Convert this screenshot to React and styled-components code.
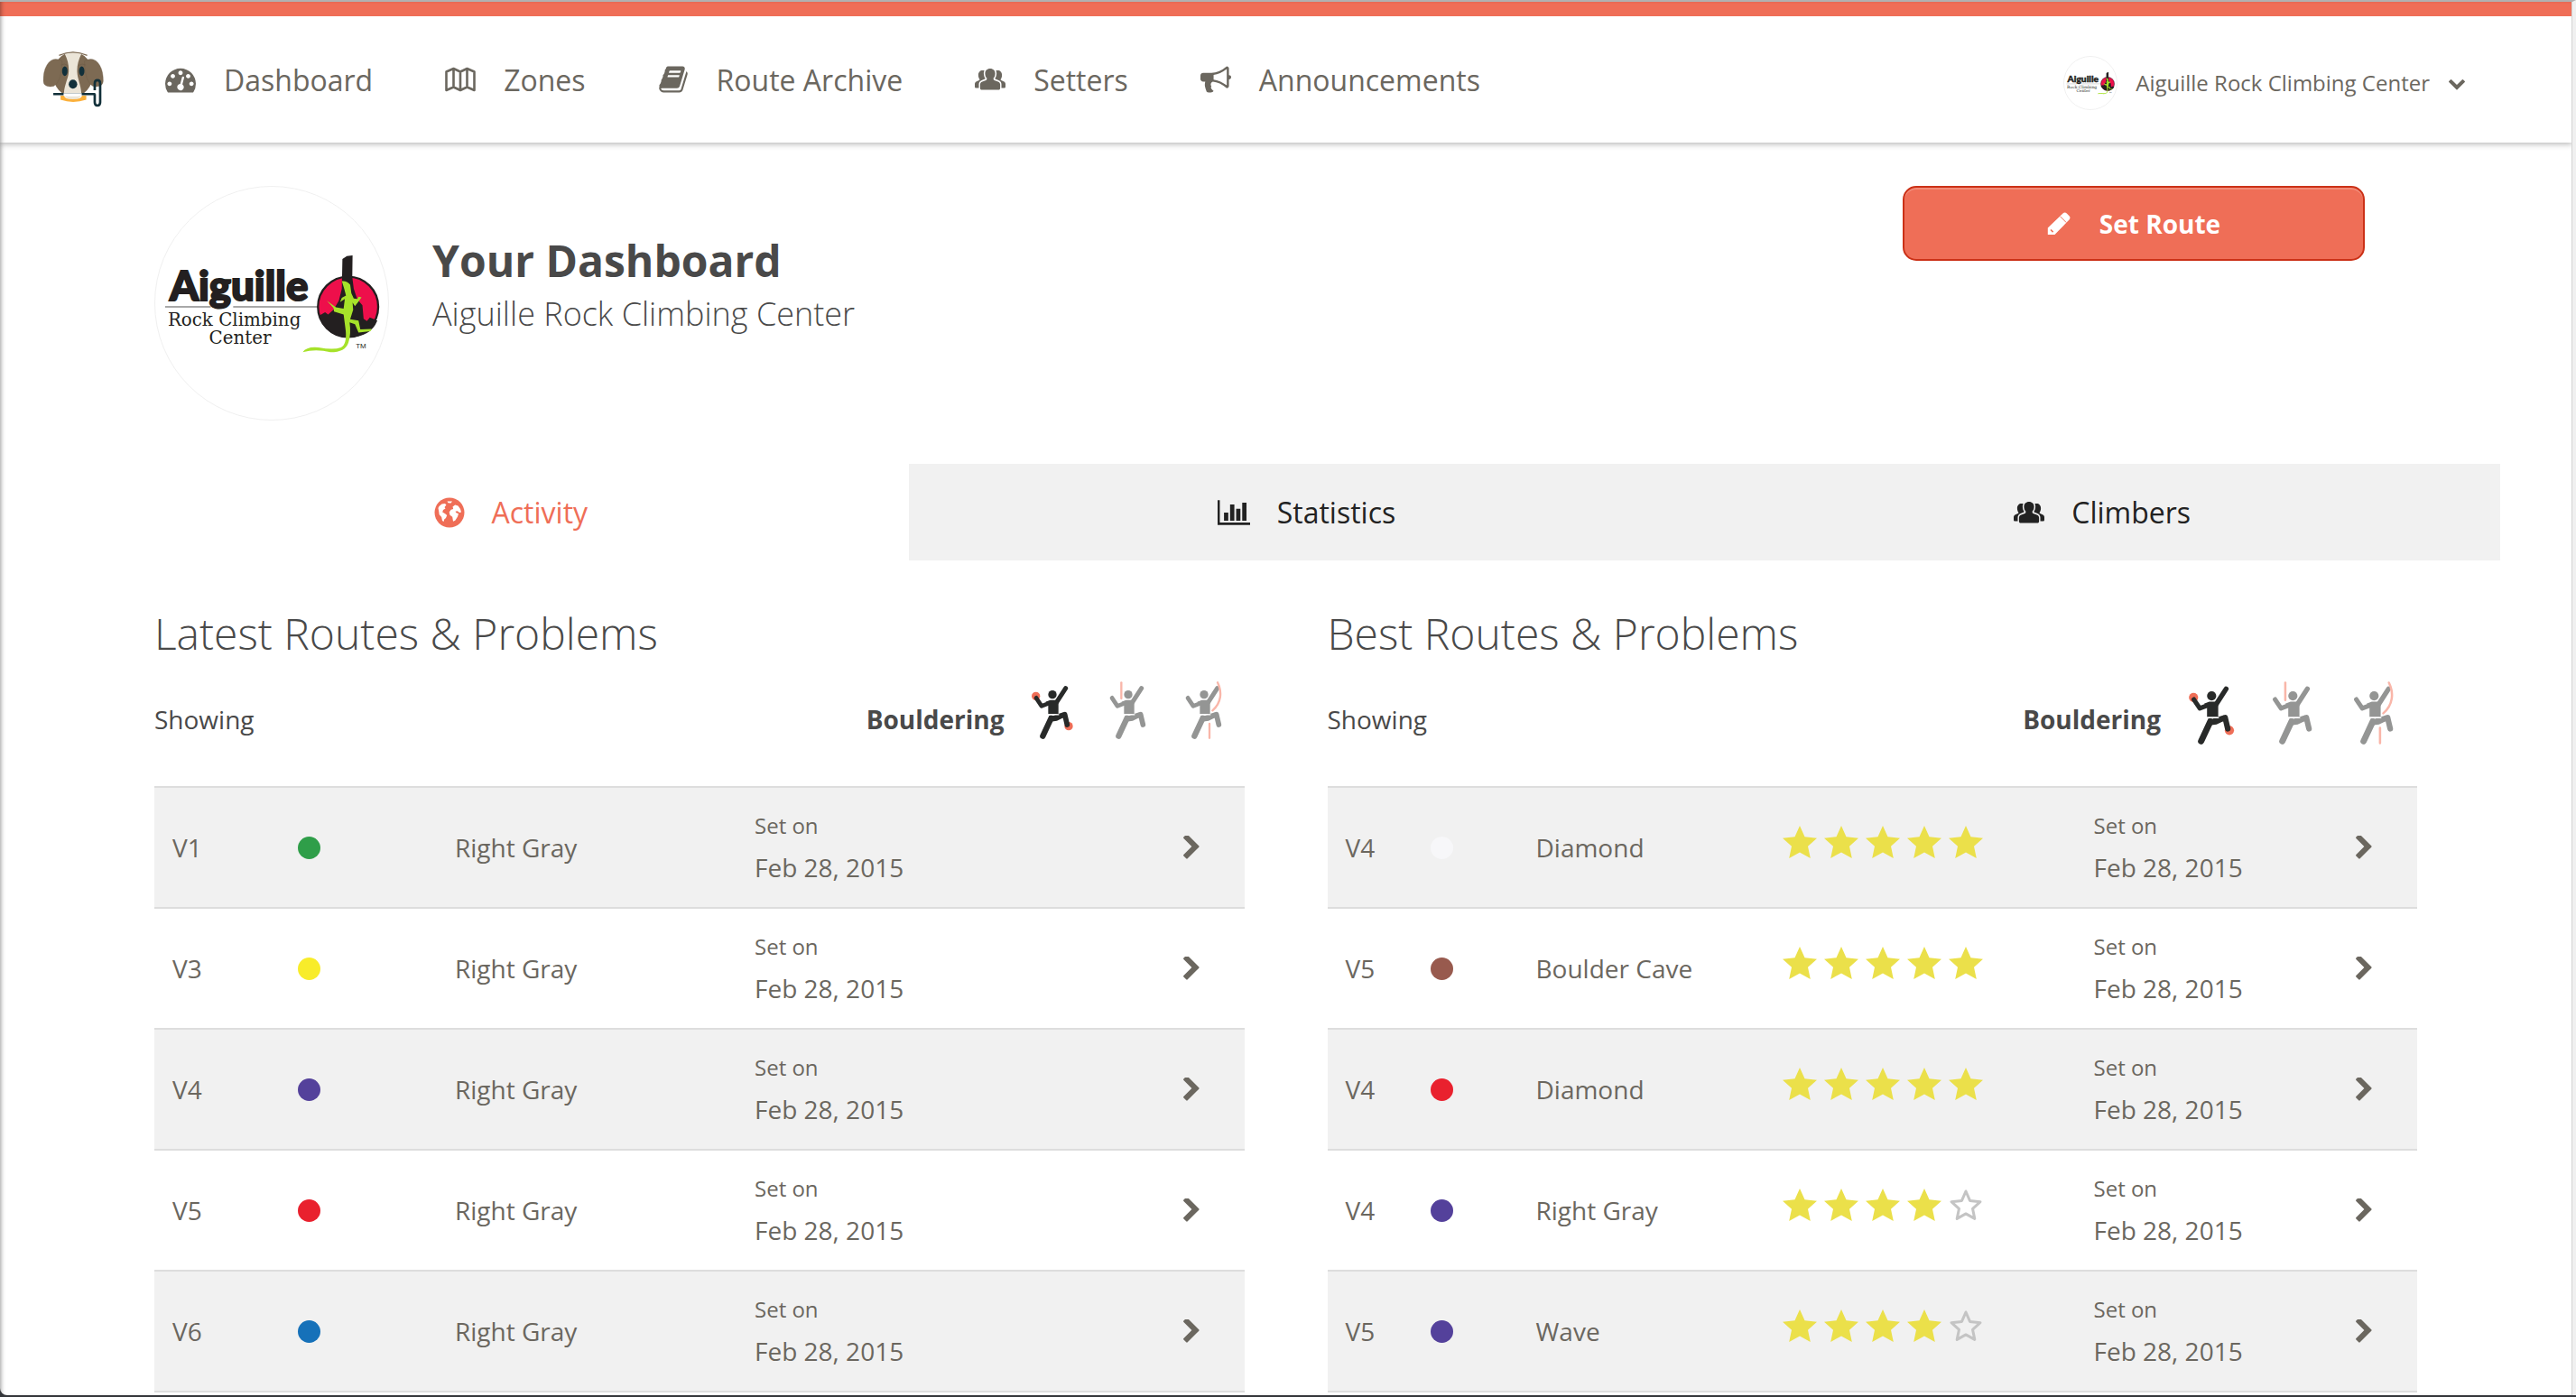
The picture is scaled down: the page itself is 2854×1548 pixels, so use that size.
import React from "react";
import styled, { createGlobalStyle, css } from "styled-components";

const color = {
  coral: "#ef6e57",
  coralDark: "#cb3117",
  text: "#6b675f",
  heading: "#494949",
  ink: "#222222",
  stripe: "#f1f1f1",
  line: "#dddddd",
  star: "#ebe04a",
};

const Global = createGlobalStyle`
  * { box-sizing: border-box; }
  body {
    margin: 0;
    background: #34363a;
    color: ${color.text};
    font-family: "Open Sans", "Noto Sans", sans-serif;
    font-size: 28px;
  }
  button { font: inherit; color: inherit; background: none; border: 0; padding: 0; cursor: pointer; }
  a { color: inherit; text-decoration: none; }
  h1, h2, p { margin: 0; }
  svg { display: block; flex: none; }
`;

/* ---------- page frame ---------- */

const Desktop = styled.div`
  height: 100vh;
  padding-bottom: 2px;
`;

const Window = styled.div`
  position: relative;
  height: 100%;
  overflow: hidden;
  background: #fff;
  border-top: 2px solid #b1b1b1;
  border-right: 4px solid #f0f0f0;
  border-bottom-left-radius: 8px;
  &::after {
    content: "";
    position: absolute;
    inset: 0;
    pointer-events: none;
    border-right: 1px solid #d4d4d4;
    box-shadow: inset 4px 0 5px -3px rgba(0, 0, 0, 0.4);
  }
`;

const Header = styled.header`
  display: flex;
  align-items: center;
  height: 156px;
  padding: 0 118px 0 48px;
  border-top: 16px solid ${color.coral};
  background: #fff;
  box-shadow: 0 1px 7px rgba(0, 0, 0, 0.35);
`;

const Brand = styled.a`
  margin-right: 68px;
`;

const Nav = styled.nav`
  display: flex;
  gap: 80px;
  font-size: 32px;
`;

const iconLabel = css`
  display: flex;
  align-items: center;
`;

const NavLink = styled.a`
  ${iconLabel}
  gap: 31px;
`;

const UserMenu = styled.button`
  display: flex;
  align-items: center;
  gap: 20px;
  margin-left: auto;
  padding-top: 7px;
  font-size: 24px;
`;

const Avatar = styled.span`
  display: block;
  width: ${(p) => p.$size}px;
  height: ${(p) => p.$size}px;
  border: 1px solid #f0f0f0;
  border-radius: 50%;
  overflow: hidden;
  svg { width: 100%; height: 100%; }
`;

const Main = styled.main`
  padding: 48px 80px 0 125px;
`;

/* ---------- profile ---------- */

const Profile = styled.section`
  display: flex;
  gap: 48px;
  padding: 0 150px 48px 46px;
`;

const ProfileText = styled.div`
  flex: 1;
  padding-top: 51px;
  color: ${color.heading};
`;

const Title = styled.h1`
  font-size: 48px;
  line-height: 64px;
  font-weight: 700;
`;

const Subtitle = styled.p`
  font-size: 36px;
  line-height: 54px;
  font-weight: 300;
`;

const PrimaryButton = styled.button`
  display: flex;
  align-items: center;
  justify-content: center;
  gap: 32px;
  width: 512px;
  height: 83px;
  border: 2px solid ${color.coralDark};
  border-radius: 15px;
  background: ${color.coral};
  box-shadow: inset 0 2px 0 rgba(255, 255, 255, 0.2);
  color: #fff;
  font-weight: 700;
`;

/* ---------- tabs ---------- */

const Tabs = styled.div`
  display: grid;
  grid-template-columns: repeat(3, 1fr);
  height: 107px;
`;

const Tab = styled.button`
  ${iconLabel}
  gap: 30px;
  justify-content: center;
  font-size: 32px;
  color: ${(p) => (p.$active ? color.coral : color.ink)};
  background: ${(p) => (p.$active ? "transparent" : color.stripe)};
`;

/* ---------- panels ---------- */

const Panels = styled.div`
  display: grid;
  grid-template-columns: 1fr 1fr;
  gap: 92px;
  padding: 49px 92px 0 46px;
`;

const PanelTitle = styled.h2`
  font-size: 48px;
  line-height: 64px;
  font-weight: 300;
  color: ${color.heading};
`;

const Filter = styled.div`
  display: flex;
  align-items: center;
  justify-content: space-between;
  margin: 21px 0 32px;
  padding-right: 18px;
  color: ${color.heading};
`;

const FilterChoices = styled.div`
  display: flex;
  align-items: center;
  gap: ${(p) => p.$gap}px;
`;

const FilterValue = styled.strong`
  margin-right: -4px;
`;

const FilterButton = styled.button`
  display: flex;
  align-items: flex-start;
  height: 84px;
`;

const Table = styled.table`
  width: 100%;
  table-layout: fixed;
  border-collapse: collapse;
  border-bottom: 2px solid ${color.line};
`;

const Col = styled.col`
  width: ${(p) => (p.$w ? `${p.$w}px` : "auto")};
`;

const Row = styled.tr`
  height: 134px;
  border-top: 2px solid ${color.line};
  &:nth-child(odd) { background: ${color.stripe}; }
`;

const Cell = styled.td`
  padding: 0 0 0 20px;
  vertical-align: middle;
  white-space: nowrap;
`;

const Dot = styled.span`
  display: block;
  width: 25px;
  height: 25px;
  border-radius: 50%;
  background: ${(p) => p.$fill};
`;

const Stars = styled.div`
  display: flex;
  gap: 8px;
  padding-bottom: 12px;
`;

const SetOn = styled.div`
  line-height: 46px;
  padding-bottom: 2px;
  small { display: block; font-size: 24px; }
`;

/* ---------- icons ---------- */

const Fa = ({ d, size = 34, w = size, box = "0 0 1792 1792" }) => (
  <svg width={w} height={size} viewBox={box} fill="currentColor" aria-hidden="true">
    <path d={d} />
  </svg>
);

const GAUGE =
  "M384 1152q0-53-37.5-90.5t-90.5-37.5-90.5 37.5-37.5 90.5 37.5 90.5 90.5 37.5 90.5-37.5 37.5-90.5zm192-448q0-53-37.5-90.5t-90.5-37.5-90.5 37.5-37.5 90.5 37.5 90.5 90.5 37.5 90.5-37.5 37.5-90.5zm428 481l101-382q6-26-7.5-48.5t-38.5-29.5-48 6.5-30 39.5l-101 382q-60 5-107 43.5t-63 98.5q-20 77 20 146t117 89 146-20 89-117q16-60-6-117t-72-91zm660-33q0-53-37.5-90.5t-90.5-37.5-90.5 37.5-37.5 90.5 37.5 90.5 90.5 37.5 90.5-37.5 37.5-90.5zm-640-640q0-53-37.5-90.5t-90.5-37.5-90.5 37.5-37.5 90.5 37.5 90.5 90.5 37.5 90.5-37.5 37.5-90.5zm448 192q0-53-37.5-90.5t-90.5-37.5-90.5 37.5-37.5 90.5 37.5 90.5 90.5 37.5 90.5-37.5 37.5-90.5zm320 448q0 261-141 483-19 29-54 29h-1402q-35 0-54-29-141-221-141-483 0-182 71-348t191-286 286-191 348-71 348 71 286 191 191 286 71 348z";
const BOOK =
  "M1703 478q40 57 18 129l-275 906q-19 64-76.5 107.5t-122.5 43.5h-923q-77 0-148.5-53.5t-99.5-131.5q-24-67-2-127 0-4 3-27t4-37q1-8-3-21.5t-3-19.5q2-11 8-21t16.5-23.5 16.5-23.5q23-38 45-91.5t30-91.5q3-10 .5-30t-.5-28q3-11 17-28t17-23q21-36 42-92t25-90q1-9-2.5-32t.5-28q4-13 22-30.5t22-22.5q19-26 42.5-84.5t27.5-96.5q1-8-3-25.5t-2-26.5q2-8 9-18t18-23 17-21q8-12 16.5-30.5t15-35 16-36 19.5-32 26.5-23.5 36-11.5 47.5 5.5l-1 3q38-9 51-9h761q74 0 114 56t18 130l-274 906q-36 119-71.5 153.5t-128.5 34.5h-869q-27 0-38 15-11 16-1 43 24 70 144 70h923q29 0 56-15.5t35-41.5l300-987q7-22 5-57 38 15 59 43zm-1064 2q-4 13 2 22.5t20 9.5h608q13 0 25.5-9.5t16.5-22.5l21-64q4-13-2-22.5t-20-9.5h-608q-13 0-25.5 9.5t-16.5 22.5zm-83 256q-4 13 2 22.5t20 9.5h608q13 0 25.5-9.5t16.5-22.5l21-64q4-13-2-22.5t-20-9.5h-608q-13 0-25.5 9.5t-16.5 22.5z";
const HORN =
  "M1664 640q53 0 90.5 37.5t37.5 90.5-37.5 90.5-90.5 37.5v384q0 52-38 90t-90 38q-417-347-812-380-58 19-91 66t-31 100.5 40 92.5q-20 33-23 65.5t6 58 33.5 55 48 50 61.5 50.5q-29 58-111.5 83t-168.5 11.5-132-55.5q-7-23-29.5-87.5t-32-94.5-23-89-15-101 3.5-98.5 22-110.5h-122q-66 0-113-47t-47-113v-192q0-66 47-113t113-47h480q435 0 896-384 52 0 90 38t38 90v384zm-128 604v-954q-394 302-768 343v270q377 42 768 341z";
const CHEVRON_RIGHT =
  "M1363 877l-742 742q-19 19-45 19t-45-19l-166-166q-19-19-19-45t19-45l531-531-531-531q-19-19-19-45t19-45l166-166q19-19 45-19t45 19l742 742q19 19 19 45t-19 45z";
const CHEVRON_DOWN =
  "M1683 808l-742 741q-19 19-45 19t-45-19l-742-741q-19-19-19-45.5t19-45.5l166-165q19-19 45-19t45 19l531 531 531-531q19-19 45-19t45 19l166 165q19 19 19 45.5t-19 45.5z";

const MapIcon = () => (
  <svg width="34" height="28" viewBox="0 0 34 28" fill="none" stroke="currentColor" strokeWidth="2.6" strokeLinejoin="round" aria-hidden="true">
    <path d="M1.5 5.5 9.5 2 17 5.5 24.5 2 32.5 5.5V26L24.5 22.5 17 26 9.5 22.5 1.5 26ZM9.5 2V22.5M17 5.5V26M24.5 2V22.5" />
  </svg>
);

const PeopleIcon = () => (
  <svg width="34" height="24" viewBox="0 0 34 24" fill="currentColor" aria-hidden="true">
    <path d="M17 0c3.400 0 5.600 2.300 5.600 5.400 0 2-.8 4-1.900 5.200v1.200c0 .6.400.9 1 1.100l4 1.500c1.600.6 2.400 1.700 2.400 3.300v4.100c0 1.200-.7 1.800-1.800 1.800H7.700c-1.100 0-1.800-.6-1.800-1.800v-4.100c0-1.600.8-2.700 2.400-3.300l4-1.500c.6-.2 1-.5 1-1.100v-1.200c-1.100-1.200-1.900-3.200-1.900-5.200C11.400 2.300 13.600 0 17 0Z" />
    <path d="M10.700 2.200C10 3.200 9.900 4.300 9.900 5.500c0 2.200.7 4.200 1.900 5.700l-4.200 1.700c-2 .8-3.100 2.400-3.100 4.500v4.200H1.600C.6 21.600 0 21 0 20v-2.900c0-1.400.6-2.300 2-2.900l2.600-1.200c.6-.3.800-.6.8-1.100-1-1.100-1.500-3-1.500-4.900 0-2.900 2-5 4.600-5 .8 0 1.500 0 2.200.2Z" />
    <path d="M23.300 2.200c.7 1 .8 2.100.8 3.300 0 2.200-.7 4.200-1.900 5.700l4.200 1.700c2 .8 3.100 2.400 3.100 4.500v4.200h2.900c1 0 1.600-.6 1.600-1.600v-2.900c0-1.400-.6-2.300-2-2.900l-2.600-1.200c-.6-.3-.8-.6-.8-1.100 1-1.100 1.500-3 1.500-4.900 0-2.900-2-5-4.600-5-.8 0-1.500 0-2.200.2Z" />
  </svg>
);

const ChartIcon = () => (
  <svg width="36" height="28" viewBox="0 0 38 29" fill="currentColor" aria-hidden="true">
    <path d="M0 0h2.600v26H38v3H0ZM7.500 14.500h5V24h-5ZM14.600 5h5v19h-5ZM21.700 10h5v14h-5ZM28.800 3h5v21h-5Z" />
  </svg>
);

const GlobeIcon = () => (
  <svg width="34" height="34" viewBox="0 0 34 34" aria-hidden="true">
    <circle cx="17" cy="17" r="16.500" fill="currentColor" />
    <g fill="#fff">
      <path d="M5.500 10 8.500 7.500 12 7l1.500 1.500-2 2.500 1 1.500-2.500 1.500-.8 2.500 3 1.700 2 1.800-1.200 3-1.800 1.500-.6 2.600-1.600-1.200-.8-4-2.500-2.600-.4-3L5 14.500 4.500 12Z" />
      <path d="M14.500 4.500h5.500l-1.500 2-3-.3ZM20.500 10.500l2.700-2 3.300 1 2.500 3.500 1 3.500-2 .5-2.200-1.800-2.300.6 1 1.500 2.500 1-1 3.200-2.700 4.300-2.300 1-.8-5-2.700-2-.8-3.300 2-2.700 2.500-.8Z" />
    </g>
  </svg>
);

const PencilIcon = () => (
  <svg width="26" height="26" viewBox="0 0 26 26" aria-hidden="true">
    <path d="M17.500 1.500c1.300-1.300 3-1.300 4.300 0l2.700 2.700c1.300 1.300 1.300 3 0 4.300L8.500 25H.8v-7.500Z" fill="#fff" />
    <path d="M14.500 4.800l6.700 6.700" stroke={color.coral} strokeWidth="1" />
    <path d="M4 19.500l2.600 2.600" stroke={color.coral} strokeWidth="1.600" />
  </svg>
);

const Star = ({ filled }) => (
  <svg width="38" height="36" viewBox="0 0 38 36" aria-hidden="true">
    {filled ? (
      <path fill={color.star} d="M19 0 24.500 12.200 38 13.700 28 22.800 30.800 36 19 29.400 7.200 36 10 22.800 0 13.700 13.500 12.200Z" />
    ) : (
      <path fill="none" stroke="#c4c4c4" strokeWidth="3" strokeLinejoin="round" d="M19 3 23.500 13.400 35 14.700 26.500 22.300 28.800 33.400 19 27.900 9.200 33.400 11.500 22.300 3 14.700 14.500 13.400Z" />
    )}
  </svg>
);

const Climber = ({ kind, active, height }) => {
  const body = active ? "#282a29" : "#949594";
  const rope = { fill: "none", stroke: "#f9b6a9", strokeWidth: 7, strokeLinecap: "round" };
  return (
    <svg width={Math.round((height * 150) / 192)} height={height} viewBox="0 0 150 192" aria-hidden="true">
      {kind === "Bouldering" && (
        <g fill={color.coral}>
          <circle cx="14" cy="49" r="14" />
          <circle cx="123" cy="149" r="14" />
        </g>
      )}
      <g fill="none" stroke={body} strokeLinecap="round" strokeLinejoin="round">
        <path d="M113 23 80 74" strokeWidth="15" />
        <path d="M15 55 33 82 62 71" strokeWidth="14" />
        <path d="M65 122 37 182" strokeWidth="19" />
        <path d="M80 120 110 110 118 144" strokeWidth="17" />
      </g>
      <g fill={body}>
        <circle cx="69" cy="44" r="14" />
        <path d="M46 68 62 62H82L89 70V108H55V74ZM58 114H89L106 103 108 119 84 131 62 134Z" />
      </g>
      <path d="M53 110.500H91" stroke="#fff" strokeWidth="4" />
      {kind === "Top rope" && <path d="M46 4V57" {...rope} />}
      {kind === "Lead" && <path d="M114 4C130 36 126 72 97 97M87 141V188" {...rope} />}
    </svg>
  );
};

const DogLogo = () => (
  <svg width="67" height="62" viewBox="0 0 200 185" role="img" aria-label="Home">
    <ellipse cx="98" cy="76" rx="66" ry="74" fill="#7d6a53" />
    <path d="M71 8Q98-4 126 8C116 28 111 46 112 68C113 92 124 108 126 140Q124 158 98 158Q72 158 68 140C70 108 82 92 84 68C85 46 81 28 71 8Z" fill="#ebe5d8" />
    <path d="M52 13Q98-8 145 13" fill="none" stroke="#7d6a53" strokeWidth="4" />
    <path d="M62 32C42 20 24 24 12 45C2 62 0 80 0 98C1 116 18 118 34 115C54 105 62 66 62 32Z" fill="#7d6a53" stroke="#6d5b46" />
    <path d="M136 32C156 20 174 24 186 45C196 62 198 80 198 98C197 116 180 118 164 115C144 105 136 66 136 32Z" fill="#7d6a53" stroke="#6d5b46" />
    <path d="M58 45Q70 38 80 46M118 46Q128 38 140 45" fill="none" stroke="#6d5b46" strokeWidth="2" />
    <ellipse cx="71" cy="65" rx="9" ry="16" fill="#12303a" />
    <ellipse cx="127" cy="65" rx="9" ry="16" fill="#12303a" />
    <ellipse cx="98" cy="108" rx="14" ry="15" fill="#12303a" />
    <path d="M57 146H69Q70 158 98 158Q126 158 128 146H142V160Q98 174 57 160Z" fill="#fbb03b" />
    <path d="M33 141H172" stroke="#12303a" strokeWidth="8" />
    <path d="M67 138H127V146Q98 151 67 146Z" fill="#fff" />
    <path d="M170 128V106Q170 95 179 95Q188 95 188 106V168Q188 179 179 179Q170 179 170 168V141" fill="none" stroke="#12303a" strokeWidth="8" />
  </svg>
);

const AiguilleLogo = () => (
  <svg viewBox="0 0 260 260" role="img" aria-label="Aiguille Rock Climbing Center">
    <path d="M11 134H62M87 134H182" stroke="#8c8c8c" strokeWidth="1.500" />
    <g fill="#231f20">
      <text x="16" y="127" fontFamily="Lato, sans-serif" fontWeight="900" fontSize="46" stroke="#231f20" strokeWidth="2">Aiguille</text>
      <text x="14" y="155" fontFamily="DejaVu Serif, serif" fontSize="20">Rock Climbing</text>
      <text x="60" y="175" fontFamily="DejaVu Serif, serif" fontSize="20">Center</text>
      <text x="224" y="180" fontFamily="Liberation Sans, sans-serif" fontSize="8">TM</text>
    </g>
    <g transform="translate(-1 64) scale(.3333)">
      <circle cx="649" cy="210" r="101" fill="#ee0f4b" stroke="#231f20" strokeWidth="7" />
      <path d="M630 50 645 40 664 38 663 110 668 150 680 185 697 205 701 250 712 258 722 246 747 256Q725 312 649 312Q575 308 551 240L572 228 582 236 600 220 618 190 628 150Z" fill="#231f20" />
      <path d="M628 124Q645 122 656 136L660 165 668 182 680 184 684 176 694 178 686 190 672 208 664 196 666 220 656 252 684 256 690 286 728 284 724 292 684 296 672 268 654 262Q660 300 650 330Q640 362 590 362Q540 350 497 362Q510 342 550 346Q600 356 625 346Q645 336 641 290L634 236 602 226 600 214 578 190 608 212 634 216 638 184 622 194 628 180 642 172 636 150Z" fill="#a6e22a" />
    </g>
  </svg>
);

/* ---------- data ---------- */

const NAV = [
  ["Dashboard", <Fa key="i" d={GAUGE} />],
  ["Zones", <MapIcon key="i" />],
  ["Route Archive", <Fa key="i" d={BOOK} />],
  ["Setters", <PeopleIcon key="i" />],
  ["Announcements", <Fa key="i" d={HORN} />],
];

const TABS = [
  ["Activity", <GlobeIcon key="i" />],
  ["Statistics", <ChartIcon key="i" />],
  ["Climbers", <PeopleIcon key="i" />],
];

const STYLES = ["Bouldering", "Top rope", "Lead"];
const DATE = "Feb 28, 2015";

const LATEST = [
  { grade: "V1", dot: "#2f9e49", name: "Right Gray" },
  { grade: "V3", dot: "#f8ec2a", name: "Right Gray" },
  { grade: "V4", dot: "#54419b", name: "Right Gray" },
  { grade: "V5", dot: "#e9212e", name: "Right Gray" },
  { grade: "V6", dot: "#1671b9", name: "Right Gray" },
];

const BEST = [
  { grade: "V4", dot: "#f7f7f9", name: "Diamond", stars: 5 },
  { grade: "V5", dot: "#985a4e", name: "Boulder Cave", stars: 5 },
  { grade: "V4", dot: "#e9212e", name: "Diamond", stars: 5 },
  { grade: "V4", dot: "#54419b", name: "Right Gray", stars: 4 },
  { grade: "V5", dot: "#54419b", name: "Wave", stars: 4 },
];

function RoutePanel({ title, routes, columns, iconHeight, iconGap }) {
  return (
    <section>
      <PanelTitle>{title}</PanelTitle>
      <Filter>
        <span>Showing</span>
        <FilterChoices $gap={iconGap}>
          <FilterValue>Bouldering</FilterValue>
          {STYLES.map((kind, i) => (
            <FilterButton key={kind} type="button" aria-label={kind} aria-pressed={i === 0}>
              <Climber kind={kind} active={i === 0} height={iconHeight} />
            </FilterButton>
          ))}
        </FilterChoices>
      </Filter>
      <Table aria-label={title}>
        <colgroup>
          {columns.map((w, i) => (
            <Col key={i} $w={w} />
          ))}
        </colgroup>
        <tbody>
          {routes.map((r, i) => (
            <Row key={i}>
              <Cell>{r.grade}</Cell>
              <Cell><Dot $fill={r.dot} /></Cell>
              <Cell>{r.name}</Cell>
              {r.stars && (
                <Cell>
                  <Stars role="img" aria-label={`${r.stars} of 5 stars`}>
                    {[1, 2, 3, 4, 5].map((n) => (
                      <Star key={n} filled={n <= r.stars} />
                    ))}
                  </Stars>
                </Cell>
              )}
              <Cell>
                <SetOn>
                  <small>Set on</small>
                  {DATE}
                </SetOn>
              </Cell>
              <Cell>
                <a href="#route" aria-label={`Open ${r.name}`}>
                  <Fa d={CHEVRON_RIGHT} w={18} size={26} box="346 118 1056 1540" />
                </a>
              </Cell>
            </Row>
          ))}
        </tbody>
      </Table>
    </section>
  );
}

export default function App() {
  return (
    <Desktop>
      <Global />
      <Window>
        <Header>
          <Brand href="#home"><DogLogo /></Brand>
          <Nav>
            {NAV.map(([label, icon]) => (
              <NavLink key={label} href="#nav">{icon}{label}</NavLink>
            ))}
          </Nav>
          <UserMenu type="button">
            <Avatar $size={60}><AiguilleLogo /></Avatar>
            Aiguille Rock Climbing Center
            <Fa d={CHEVRON_DOWN} size={20} />
          </UserMenu>
        </Header>
        <Main>
          <Profile>
            <Avatar $size={260}><AiguilleLogo /></Avatar>
            <ProfileText>
              <Title>Your Dashboard</Title>
              <Subtitle>Aiguille Rock Climbing Center</Subtitle>
            </ProfileText>
            <PrimaryButton type="button"><PencilIcon />Set Route</PrimaryButton>
          </Profile>
          <Tabs role="tablist">
            {TABS.map(([label, icon], i) => (
              <Tab key={label} type="button" role="tab" aria-selected={i === 0} $active={i === 0}>
                {icon}{label}
              </Tab>
            ))}
          </Tabs>
          <Panels>
            <RoutePanel title="Latest Routes &amp; Problems" routes={LATEST} columns={[139, 174, 332, 0, 88]} iconHeight={64} iconGap={34} />
            <RoutePanel title="Best Routes &amp; Problems" routes={BEST} columns={[94, 117, 273, 345, 0, 88]} iconHeight={70} iconGap={35} />
          </Panels>
        </Main>
      </Window>
    </Desktop>
  );
}
